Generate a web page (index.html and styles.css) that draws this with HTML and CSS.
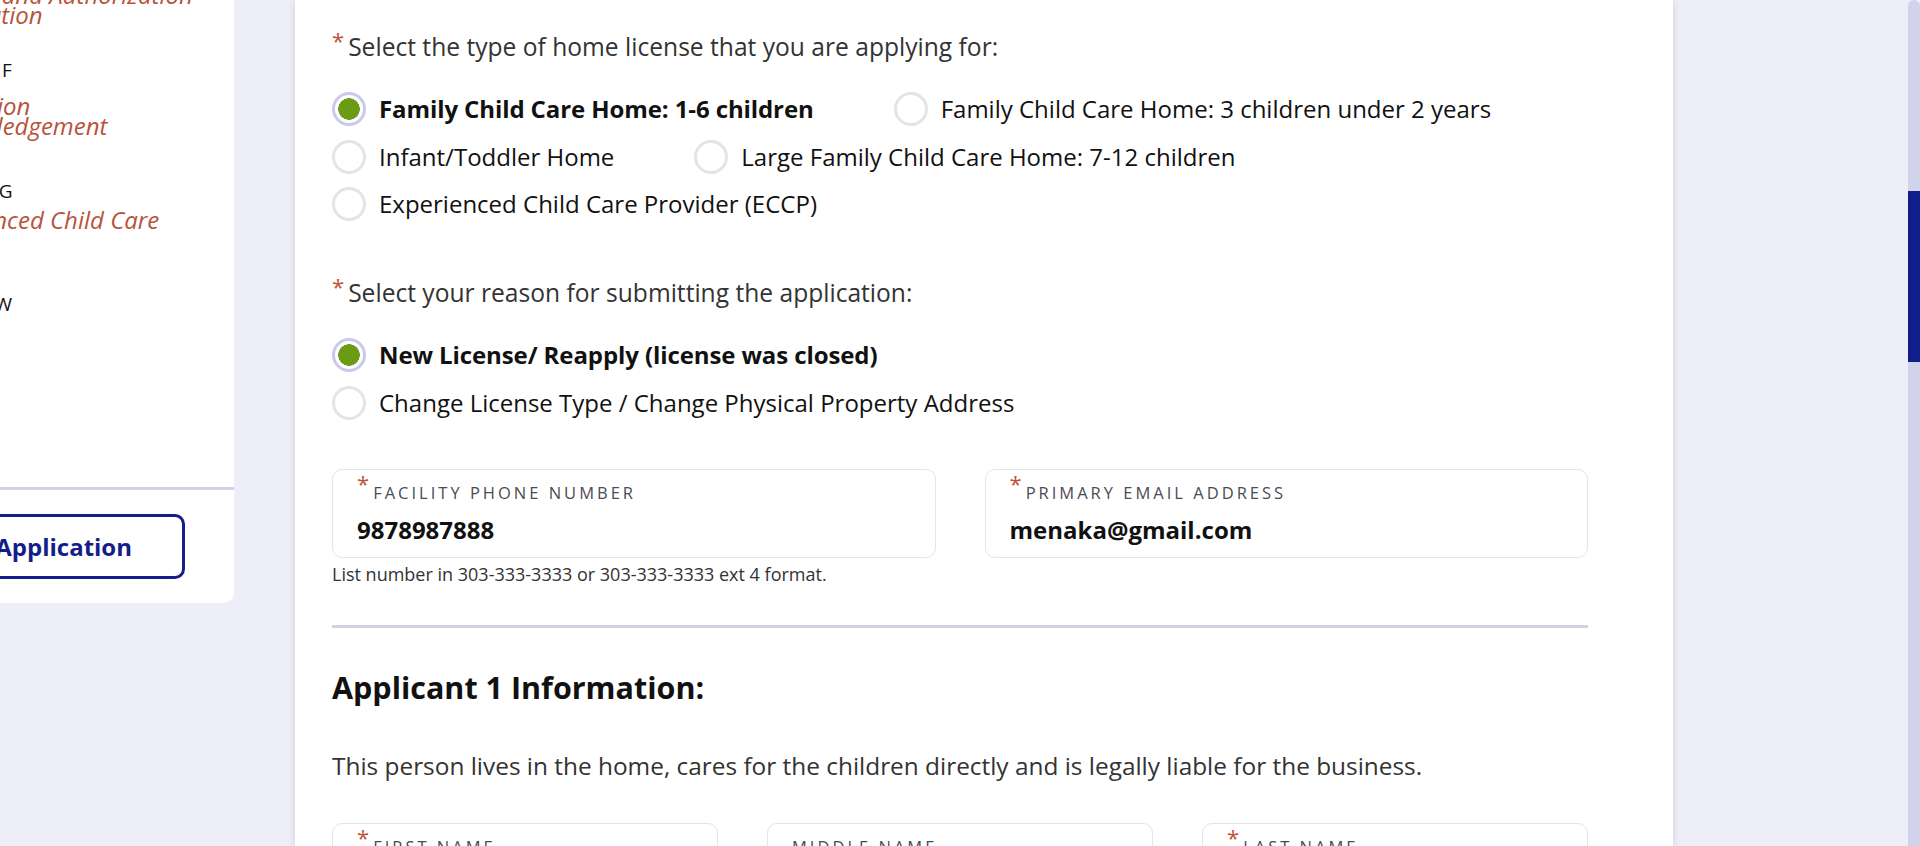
FILE: index.html
```html
<!DOCTYPE html>
<html lang="en">
<head>
<meta charset="utf-8">
<title>Home License Application</title>
<link rel="stylesheet" href="styles.css">
</head>
<body>
<div class="page">
  <aside class="sidebar">
    <div class="sidebar-inner">
      <nav class="nav">
        <a class="nav-link link-e">Release and Authorization<br>Information</a>
        <div class="nav-sec sec-f">SECTION F</div>
        <a class="nav-link link-f">Attestation<br>Acknowledgement</a>
        <div class="nav-sec sec-g">SECTION G</div>
        <a class="nav-link link-g">Experienced Child Care</a>
        <div class="nav-sec sec-r">OVERVIEW</div>
      </nav>
      <hr class="side-divider">
      <div class="side-actions">
        <button class="btn-outline" type="button">Submit Application</button>
      </div>
    </div>
  </aside>

  <main class="card">
    <form class="form">
      <div class="question">
        <div class="q-label"><span class="req">*</span>Select the type of home license that you are applying for:</div>
        <div class="options">
          <label class="option"><input type="radio" name="type" checked><span>Family Child Care Home: 1-6 children</span></label>
          <label class="option"><input type="radio" name="type"><span>Family Child Care Home: 3 children under 2 years</span></label>
          <label class="option"><input type="radio" name="type"><span>Infant/Toddler Home</span></label>
          <label class="option"><input type="radio" name="type"><span>Large Family Child Care Home: 7-12 children</span></label>
          <label class="option"><input type="radio" name="type"><span>Experienced Child Care Provider (ECCP)</span></label>
        </div>
      </div>

      <div class="question q-second">
        <div class="q-label"><span class="req">*</span>Select your reason for submitting the application:</div>
        <div class="options">
          <label class="option"><input type="radio" name="reason" checked><span>New License/ Reapply (license was closed)</span></label>
          <label class="option"><input type="radio" name="reason"><span>Change License Type / Change Physical Property Address</span></label>
        </div>
      </div>

      <div class="grid-2">
        <div class="cell">
          <div class="field">
            <div class="field-label"><span class="req">*</span>Facility Phone Number</div>
            <input class="field-input" type="text" value="9878987888">
          </div>
          <div class="hint">List number in 303-333-3333 or 303-333-3333 ext 4 format.</div>
        </div>
        <div class="cell">
          <div class="field">
            <div class="field-label"><span class="req">*</span>Primary Email Address</div>
            <input class="field-input" type="text" value="menaka@gmail.com">
          </div>
        </div>
      </div>

      <div class="section-divider"></div>

      <h2 class="section-title">Applicant 1 Information:</h2>
      <p class="section-text">This person lives in the home, cares for the children directly and is legally liable for the business.</p>

      <div class="grid-3">
        <div class="field">
          <div class="field-label"><span class="req">*</span>First Name</div>
          <input class="field-input" type="text" value="">
        </div>
        <div class="field">
          <div class="field-label">Middle Name</div>
          <input class="field-input" type="text" value="">
        </div>
        <div class="field">
          <div class="field-label"><span class="req">*</span>Last Name</div>
          <input class="field-input" type="text" value="">
        </div>
      </div>
    </form>
  </main>

  <div class="scrollbar"><div class="scrollbar-thumb"></div></div>
</div>
</body>
</html>
```

FILE: styles.css
```css
* { box-sizing: border-box; }

html, body {
  margin: 0;
  padding: 0;
  height: 100%;
  overflow: hidden;
}

body {
  font-family: "Open Sans", "Liberation Sans", sans-serif;
  background: #eeeef8;
  color: #111;
}

.page {
  display: flex;
  height: 846px;
  overflow: hidden;
  background: #eeeef8;
}

/* ---------- sidebar ---------- */
.sidebar {
  width: 234px;
  flex-shrink: 0;
  margin-right: 61px;
  align-self: flex-start;
  background: #fff;
  border-bottom-right-radius: 10px;
  overflow: hidden;
}

.sidebar-inner {
  margin-left: -114px;
  padding-left: 30px;
  padding-bottom: 24px;
}

.nav {
  height: 502px;
  margin-top: -15px;
}

.nav-link {
  display: block;
  font-size: 24px;
  line-height: 20px;
  font-style: italic;
  color: #b8533b;
  white-space: nowrap;
}

.nav-sec {
  font-size: 19px;
  line-height: 24px;
  letter-spacing: 0.4px;
  color: #111;
  white-space: nowrap;
}

.sec-f { margin-top: 33px; }
.link-f { margin-top: 14px; }
.sec-g { margin-top: 43px; letter-spacing: 0; }
.link-g { margin-top: 7px; }
.sec-r { margin-top: 62px; }

.side-divider {
  margin: 0 0 0 -30px;
  border: 0;
  height: 3px;
  background: #d0d2e8;
}

.side-actions {
  display: flex;
  justify-content: flex-end;
  padding: 24px 49px 0 0;
}

.btn-outline {
  flex-shrink: 0;
  font-family: inherit;
  font-size: 24px;
  line-height: 29px;
  font-weight: 700;
  color: #141e8a;
  background: #fff;
  border: 3px solid #141e8a;
  border-radius: 10px;
  padding: 15px 50px;
  white-space: nowrap;
}

/* ---------- main card ---------- */
.card {
  width: 1378px;
  flex-shrink: 0;
  background: #fff;
  padding: 32px 37px 0;
  box-shadow: 0 0 7px rgba(60, 60, 110, 0.16);
}

.form {
  width: 1256px;
}

.q-label {
  font-size: 24.6px;
  line-height: 29px;
  color: #333;
}

.req {
  color: #c0503a;
  font-size: 22px;
  line-height: 0;
  vertical-align: 0.3em;
  margin-right: 4px;
}

.options {
  display: flex;
  flex-wrap: wrap;
  column-gap: 80px;
  row-gap: 13.5px;
  margin-top: 31px;
}

.option {
  display: inline-flex;
  align-items: center;
  gap: 13px;
  height: 34px;
  font-size: 24px;
  line-height: 34px;
  color: #111;
  white-space: nowrap;
}

.option input {
  appearance: none;
  -webkit-appearance: none;
  margin: 0;
  width: 34px;
  height: 34px;
  flex-shrink: 0;
  border: 3px solid #e4e4e6;
  border-radius: 50%;
  background: #fff;
}

.option input:checked {
  border-color: #c9cae7;
  background: radial-gradient(circle, #6b9b14 0 10.5px, #fff 11px);
}

.option input:checked + span {
  font-weight: 700;
  letter-spacing: -0.1px;
}

.q-second { margin-top: 57px; }

/* ---------- fields ---------- */
.grid-2 {
  display: grid;
  grid-template-columns: 1fr 1fr;
  column-gap: 49px;
  margin-top: 49.5px;
}

.grid-3 {
  display: grid;
  grid-template-columns: 1fr 1fr 1fr;
  column-gap: 49px;
  margin-top: 43px;
}

.field {
  border: 1px solid #e4e4ea;
  border-radius: 10px;
  padding: 12.5px 24px 12px;
}

.field-label {
  font-size: 16.5px;
  line-height: 20px;
  letter-spacing: 3px;
  text-transform: uppercase;
  color: #4b4b55;
  white-space: nowrap;
}

.field-label .req {
  letter-spacing: 0;
}

.field-input {
  display: block;
  width: 100%;
  height: 30px;
  margin-top: 12px;
  padding: 0;
  border: 0;
  outline: none;
  font-family: inherit;
  font-size: 24px;
  font-weight: 700;
  color: #111;
  background: transparent;
}

.hint {
  margin-top: 5px;
  font-size: 18px;
  line-height: 22px;
  color: #333;
}

.section-divider {
  height: 3px;
  background: #d0d2e8;
  margin-top: 40.5px;
}

.section-title {
  margin: 38.5px 0 0;
  font-size: 30.5px;
  line-height: 40px;
  font-weight: 700;
  color: #111;
}

.section-text {
  margin: 44.5px 0 0;
  font-size: 24.4px;
  line-height: 29px;
  color: #333;
}

/* ---------- scrollbar ---------- */
.scrollbar {
  width: 12px;
  margin-left: auto;
  flex-shrink: 0;
  background: #d1d3ea;
  border-radius: 6px 6px 0 0;
}

.scrollbar-thumb {
  margin-top: 191px;
  height: 171px;
  background: #111d8b;
}
```
